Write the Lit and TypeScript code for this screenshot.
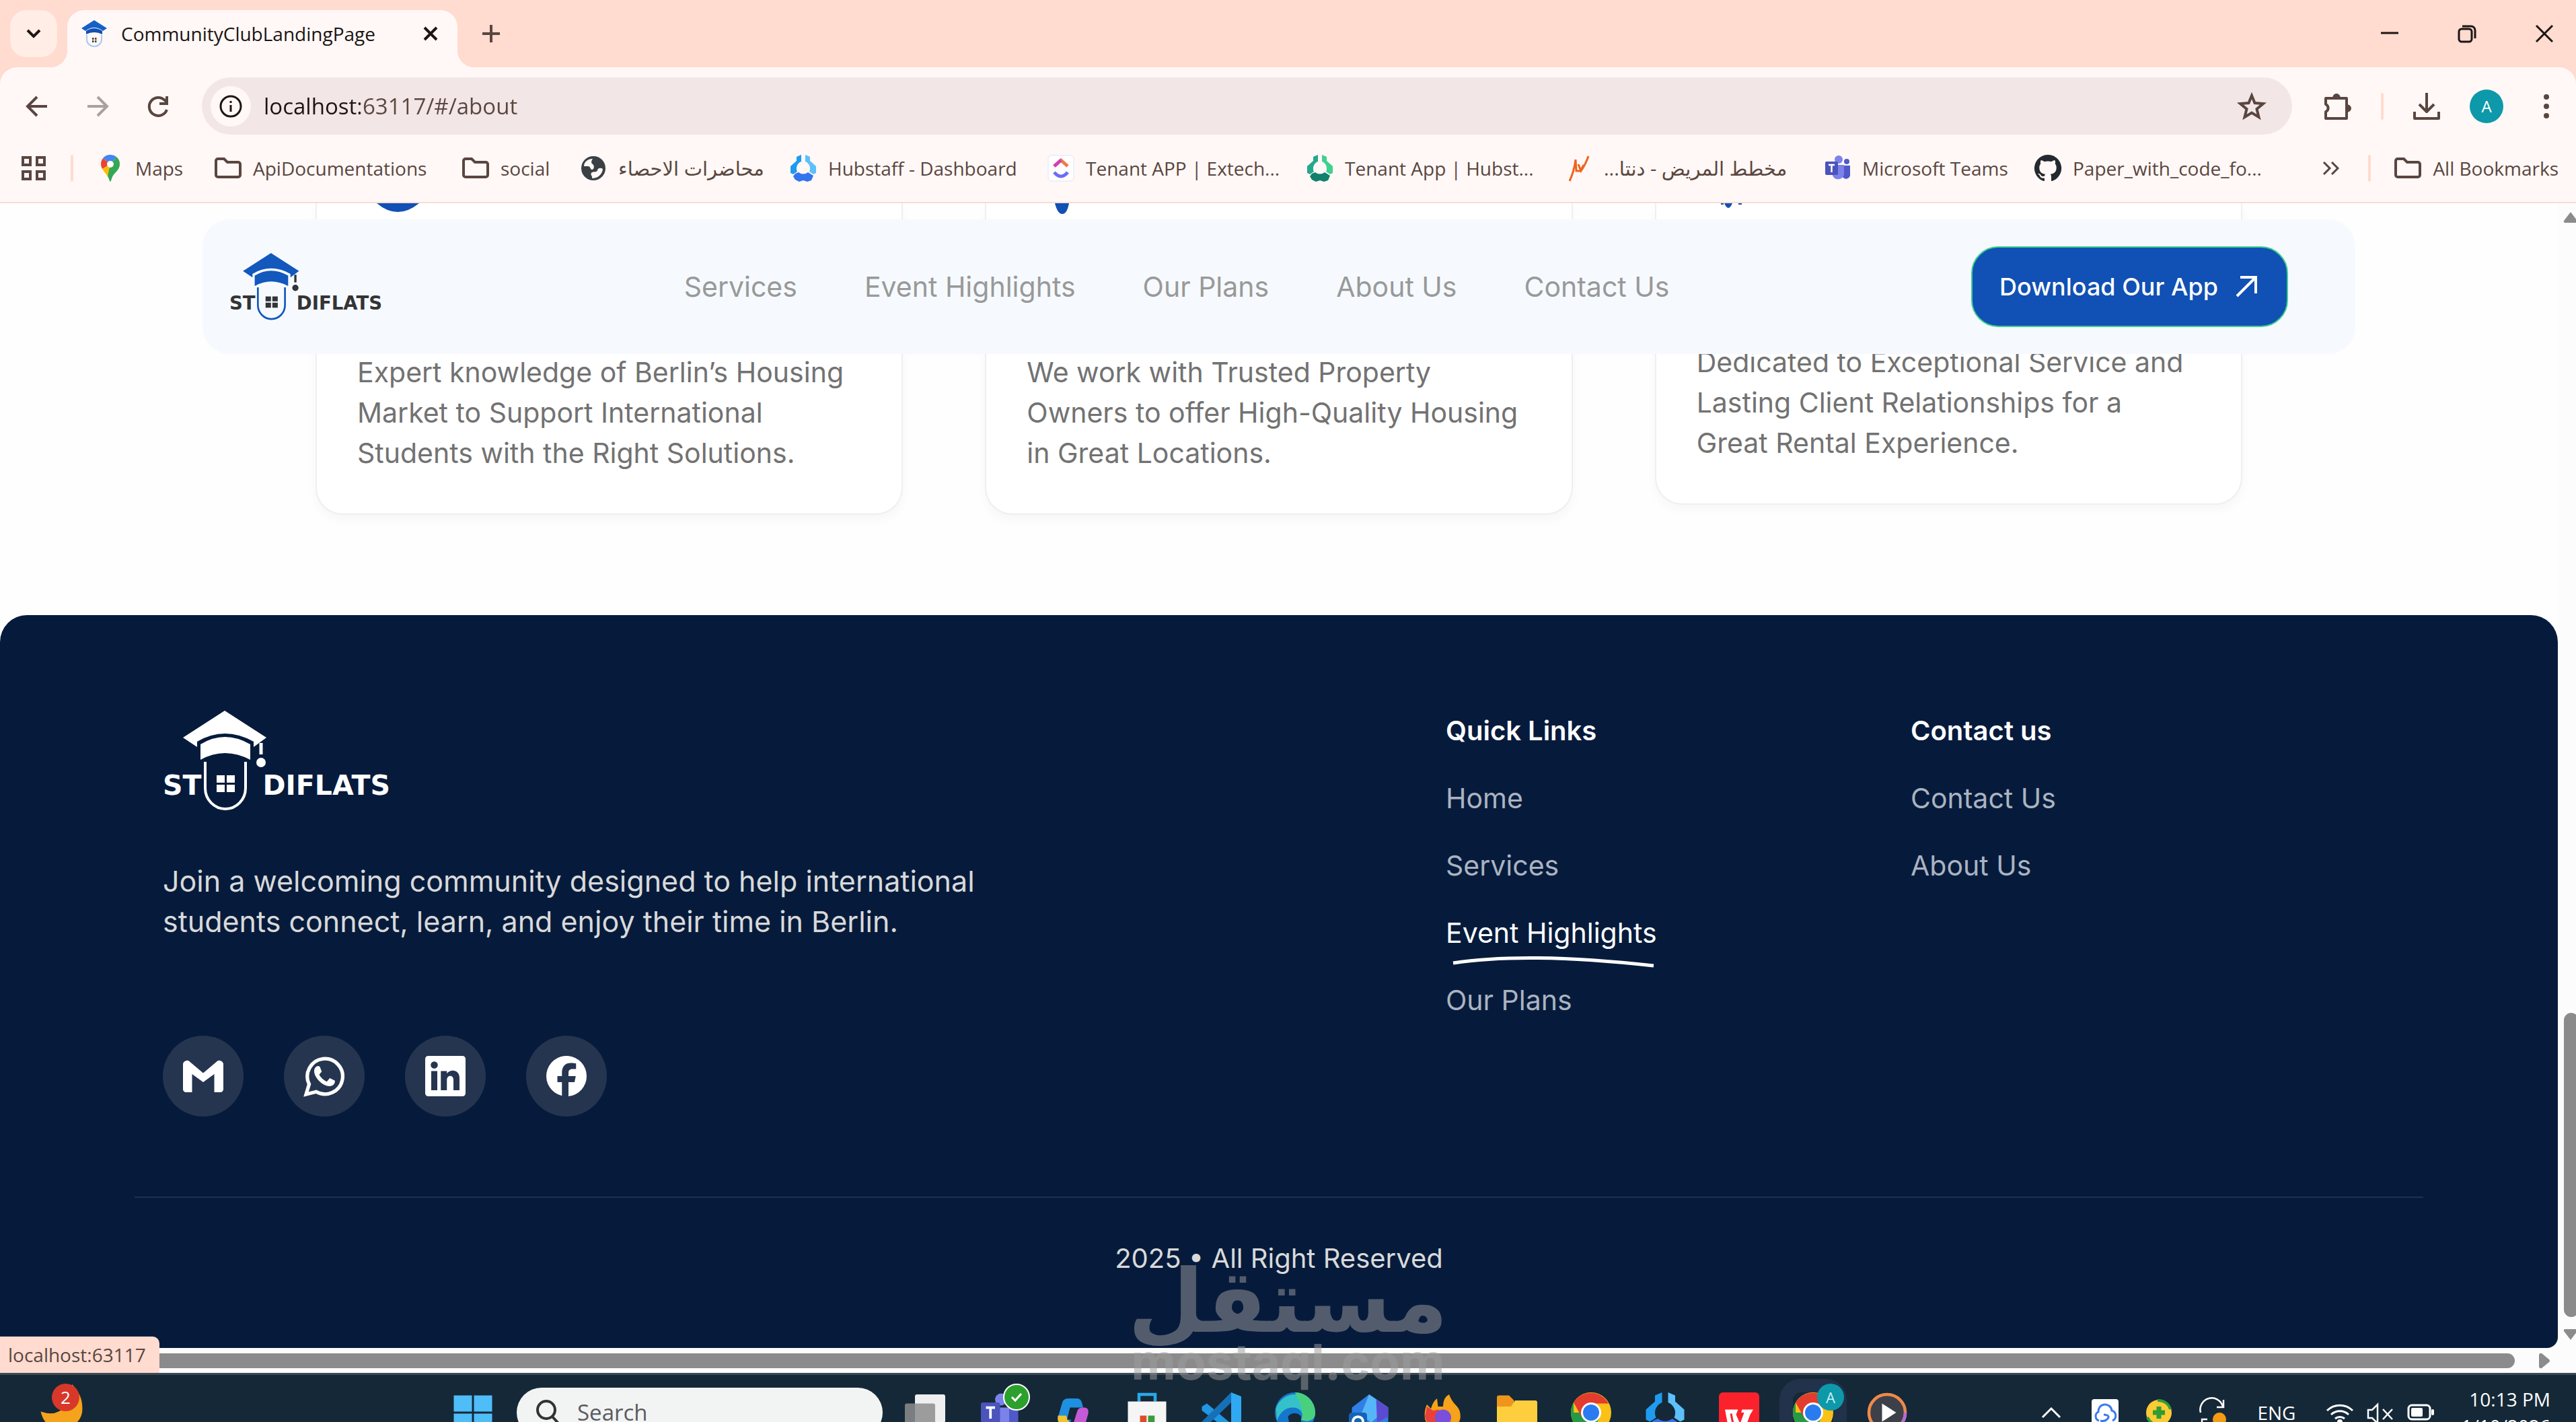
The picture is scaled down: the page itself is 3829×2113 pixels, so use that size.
import { LitElement, html, svg, css, nothing } from "lit";
import { customElement, property } from "lit/decorators.js";

const gearPath = (a: string, b: string, c: string) => svg`
  <path d="M17 0 10 3 10 9 1 17 1 27 5 29 11 25 A11 11 0 0 1 17 10Z" fill=${a} />
  <path d="M23 0 30 3 30 9 39 17 39 27 35 29 29 25 A11 11 0 0 0 23 10Z" fill=${b} />
  <path d="M8 28 13 26 A11 11 0 0 0 27 26 L35 31 32 38 26 40 20 38 14 40 8 37 5 32Z" fill=${c} />`;

const chromeArt = svg`
  <circle cx="20" cy="20" r="20" fill="#fbc116" />
  <path d="M20 20H2.7V10A20 20 0 0 0 20 40L28.600 25Z" fill="#249a45" />
  <path d="M2.700 10 11 25 20 11H37.300A20 20 0 0 0 2.700 10Z" fill="#e33b2e" />
  <circle cx="20" cy="20" r="10" fill="#fff" />
  <circle cx="20" cy="20" r="8" fill="#2a7bef" />`;

const teamsArt = svg`
  <circle cx="22" cy="7" r="6" fill="#7b83eb" />
  <circle cx="34" cy="10" r="4" fill="#5059c9" />
  <path d="M27 16H39V28A6 6 0 0 1 27 31Z" fill="#5059c9" />
  <path d="M13 15H30V29A9 9 0 0 1 13 31Z" fill="#7b83eb" />
  <rect x="2" y="10" width="19" height="20" rx="2" fill="#4b53bc" />
  <path d="M7 15H16M11.500 15V26" stroke="#fff" stroke-width="2.500" fill="none" />`;

const line = "#5a4640";

/* Every icon is drawn on a 40 by 40 grid. */
const icons: Record<string, unknown> = {
  chevronDown: svg`<path d="M11 15 20 24 29 15" fill="none" stroke="#1c1514" stroke-width="4" />`,
  tabClose: svg`<path d="M11 11 29 29M29 11 11 29" stroke="#1c1514" stroke-width="4" />`,
  plus: svg`<path d="M7 20H33M20 7V33" stroke=${line} stroke-width="4" />`,
  minimise: svg`<path d="M7 19H33" stroke="#1c1514" stroke-width="3" />`,
  restore: svg`<rect x="8" y="13" width="19" height="19" rx="4" fill="none" stroke="#1c1514" stroke-width="3" /><path d="M13 9H26A6 6 0 0 1 32 15V27" fill="none" stroke="#1c1514" stroke-width="3" />`,
  close: svg`<path d="M8 8 32 32M32 8 8 32" stroke="#1c1514" stroke-width="3" />`,
  back: svg`<path d="M35 20H7M20 6 6 20 20 34" fill="none" stroke=${line} stroke-width="4" />`,
  forward: svg`<path d="M5 20H33M20 6 34 20 20 34" fill="none" stroke="#aaa19f" stroke-width="4" />`,
  reload: svg`<path d="M33 25A13.500 13.500 0 1 1 30 11L33 14" fill="none" stroke=${line} stroke-width="4" /><path d="M35 5V18H22V14H31V5Z" fill=${line} />`,
  info: svg`<circle cx="20" cy="20" r="15" fill="none" stroke="#1c1514" stroke-width="3" /><path d="M20 18V28M20 12V15" stroke="#1c1514" stroke-width="3" />`,
  star: svg`<path d="M20 4 24.500 15 37 16 27.500 24 30.500 36 20 29.500 9.500 36 12.500 24 3 16 15.500 15Z" fill="none" stroke=${line} stroke-width="4" />`,
  puzzle: svg`<path d="M2 8H33V38H2V28A6 6 0 0 0 2 17Z" fill="none" stroke=${line} stroke-width="4" stroke-linejoin="round" /><path d="M12 8A6 7 0 0 1 24 8ZM33 17A7 6 0 0 1 33 29Z" fill=${line} />`,
  download: svg`<path d="M20 0V27M9 17 20 28 31 17M2 28V38H38V28" fill="none" stroke=${line} stroke-width="4" stroke-linejoin="round" />`,
  dots: svg`<g fill=${line}><circle cx="20" cy="6" r="4" /><circle cx="20" cy="20" r="4" /><circle cx="20" cy="34" r="4" /></g>`,
  apps: svg`<g fill="none" stroke=${line} stroke-width="4"><rect x="4" y="4" width="11" height="11" /><rect x="25" y="4" width="11" height="11" /><rect x="4" y="25" width="11" height="11" /><rect x="25" y="25" width="11" height="11" /></g>`,
  more: svg`<path d="M9 11 18 20 9 29M21 11 30 20 21 29" fill="none" stroke=${line} stroke-width="3" />`,
  folder: svg`<path d="M2 9A3 3 0 0 1 5 6H14L19 11H35A3 3 0 0 1 38 14V30A3 3 0 0 1 35 33H5A3 3 0 0 1 2 30Z" fill="none" stroke=${line} stroke-width="4" />`,
  maps: svg`<path d="M20 0A14 14 0 0 0 9 5L20 14 29 3A14 14 0 0 0 20 0Z" fill="#4285f4" /><path d="M9 5A14 14 0 0 0 8 21L20 14Z" fill="#ea4335" /><path d="M8 21C10 25 14 28 16 32L27 19 20 14Z" fill="#fbbc04" /><path d="M16 32C18 35 19 40 20 40S22 34 24 31C27 26 34 22 34 14A14 14 0 0 0 29 3L20 14Z" fill="#34a853" /><circle cx="20" cy="14" r="5" fill="#fff" />`,
  globe: svg`<circle cx="20" cy="20" r="18" fill="#3b4045" /><path d="M19 6C10 6 6 12 6 17H12C16 17 15 22 18 22S22 16 19 14 17 9 19 6ZM18 35C19 31 15 30 17 27S25 27 26 23 31 19 34 21C33 30 26 35 18 35Z" fill="#fff8f6" />`,
  hubstaff: gearPath("#1e9bf0", "#5bc0fb", "#3273f0"),
  hubstaffGreen: gearPath("#25a88c", "#3fd18f", "#12806d"),
  clickup: svg`<rect x="1" y="1" width="38" height="38" rx="5" fill="#fff" stroke="#dce7f5" /><path d="M10 17 20 8 30 17" fill="none" stroke="#f07a4a" stroke-width="5" /><path d="M10 17 20 8" fill="none" stroke="#d23fb8" stroke-width="5" /><path d="M10 26Q20 38 30 26" fill="none" stroke="#6d6df5" stroke-width="5" />`,
  trend: svg`<path d="M6 39Q13 24 15 7M15 7 16 24 22 24 27 15M19 14 23 24Q30 14 34 2" fill="none" stroke="#f0641e" stroke-width="3" />`,
  teams: teamsArt,
  github: svg`<path d="M20 0A20 20 0 0 0 13.700 39C14.700 39.200 15 38.600 15 38V34.500C9.500 35.700 8.300 32 8.300 32 7.400 29.700 6.100 29 6.100 29 4.300 27.800 6.200 27.800 6.200 27.800 8.200 28 9.300 29.900 9.300 29.900 11.100 32.900 14 32 15.100 31.500 15.300 30.200 15.800 29.300 16.400 28.800 12 28.300 7.300 26.600 7.300 18.900 7.300 16.700 8.100 15 9.300 13.600 9.100 13.100 8.400 11 9.500 8.200 9.500 8.200 11.200 7.700 15 10.300A19 19 0 0 1 25 10.300C28.800 7.700 30.500 8.200 30.500 8.200 31.600 11 30.900 13.100 30.700 13.600 32 15 32.700 16.700 32.700 18.900 32.700 26.600 28 28.300 23.600 28.800 24.300 29.400 25 30.600 25 32.500V38C25 38.600 25.300 39.200 26.400 39A20 20 0 0 0 20 0Z" fill="#24292f" />`,
  favicon: svg`<path d="M20 0 39 12 33 16Q20 6 7 16L1 12Z" fill="#1560c8" /><path d="M8 16Q20 8 32 16V21Q20 15 8 21Z" fill="#1150b4" /><path d="M9 22V29A11 10 0 0 0 31 29V22" fill="none" stroke="#a9c8f2" stroke-width="2" /><path d="M17 26H19.500V29H17ZM21 26H23.500V29H21ZM17 30H19.500V33H17ZM21 30H23.500V33H21Z" fill="#444" />`,
  arrowOut: svg`<path d="M6 34 34 6M11 6H34V30" fill="none" stroke="#fff" stroke-width="4" />`,
  gmail: svg`<path d="M0 9A4 4 0 0 1 7 6L20 17 33 6A4 4 0 0 1 40 9V33A3 3 0 0 1 37 36H31V18L20 26 9 18V36H3A3 3 0 0 1 0 33Z" fill="#fff" />`,
  whatsapp: svg`<path d="M2 38 5 28A17.500 17.500 0 1 1 12 35.500Z" fill="none" stroke="#fff" stroke-width="3.500" /><path d="M14 10C12 10 10 12 10 15 10 22 19 30 25 30 29 30 31 27 30.500 24.500L25.500 22 22.500 25.500C19 24 16.500 21.500 15 18.500L17.500 15.500 15.500 10.500Z" fill="#fff" />`,
  linkedin: svg`<path fill-rule="evenodd" d="M3 0H37A3 3 0 0 1 40 3V37A3 3 0 0 1 37 40H3A3 3 0 0 1 0 37V3A3 3 0 0 1 3 0ZM6 15V34H12V15ZM9 5.500A3.500 3.500 0 1 0 9 12.500 3.500 3.500 0 1 0 9 5.500ZM15.500 15V34H21.500V24C21.500 18.500 28 18.500 28 23.500V34H34V22C34 13 24.500 13 21.500 17.500V15Z" fill="#fff" />`,
  facebook: svg`<path d="M40 20A20 20 0 1 0 15.500 39.500V26H11V20H15.500V17C15.500 10 19 7 24.500 7 26.500 7 28 7.200 29.500 7.500V13H26C23 13 22 14.500 22 17V20H29.200L28 26H22V40A20 20 0 0 0 40 20Z" fill="#fff" />`,
  windows: svg`<path d="M1 3H19V19H1ZM21 3H39V19H21ZM1 21H19V37H1ZM21 21H39V37H21Z" fill="#4fbdf8" />`,
  search: svg`<circle cx="18" cy="16" r="13" fill="none" stroke="#333" stroke-width="4" /><path d="M27 26 37 37" stroke="#333" stroke-width="4" />`,
  taskView: svg`<rect x="10" y="2" width="30" height="28" rx="2" fill="#efefef" /><rect x="0" y="11" width="30" height="26" rx="2" fill="#8d8d8d" opacity=".85" />`,
  copilot: svg`<path d="M15 6H24Q28 6 29 11L30 15H24Q21 15 20 19L17 31H10Q4 31 5 25L9 11Q10 6 15 6Z" fill="#1f8fe0" /><path d="M29 15H31Q36 15 35 21L32 32Q31 36 26 36H15Q19 36 20 32L24 19Q25 15 29 15Z" fill="#c45ad8" /><path d="M5 23 13 23 17 31 15 36Q10 36 9 31Q4 31 5 23Z" fill="#f3c22f" /><path d="M17 15H23L19 27H14Z" fill="#152837" />`,
  store: svg`<path d="M12 9V2H28V9" fill="none" stroke="#28a8ea" stroke-width="3" /><path d="M1 9H39V35A4 4 0 0 1 35 39H5A4 4 0 0 1 1 35Z" fill="#f5f5f5" /><path d="M13 23H19.500V33H13Z" fill="#e04a2c" /><path d="M21 23H27.500V33H21Z" fill="#3c9a3c" /><path d="M13 34H19.500V38H13Z" fill="#1e9ae0" /><path d="M21 34H27.500V38H21Z" fill="#f3b41c" />`,
  vscode: svg`<path d="M30 10 12 23 26 34Z" fill="#152837" /><path d="M1 14 6 11 30 31V40L1 18Z" fill="#2196e3" /><path d="M1 29 30 0V10L6 33 1 31Z" fill="#1670b8" /><path d="M30 0 40 4V36L30 40Z" fill="#2fa9f2" />`,
  edge: svg`<circle cx="20" cy="20" r="20" fill="#1477cc" /><path d="M1 16A20 20 0 0 1 40 20C40 28 32 30 26 27 29 22 26 15 18 15 10 15 5 20 2 28Z" fill="#35c1c9" /><path d="M20 0A20 20 0 0 1 40 20C40 28 32 30 26 27 29 22 27 14 20 0Z" fill="#49d07f" /><path d="M13 24A8 8 0 0 1 26 24V40H16Z" fill="#152837" />`,
  outlook: svg`<path d="M20 2 39 15V36H3V15Z" fill="#2f7fe6" /><path d="M20 2 39 15 22 30 12 22Z" fill="#56b6fa" /><path d="M27 7 39 15V24L28 30Z" fill="#5a4bd0" /><rect x="0" y="20" width="18" height="20" rx="3" fill="#1463b8" /><circle cx="9" cy="29" r="5" fill="none" stroke="#fff" stroke-width="2.500" />`,
  firefox: svg`<path d="M4 12 8 16Q10 9 14 6L15 14H20Q20 5 26 2 28 8 33 13 38 18 37 26A18 17 0 0 1 2 26Q1 18 4 12Z" fill="#f7a21b" /><path d="M4 14 10 18 16 17 18 24 12 36A18 17 0 0 1 2 24Z" fill="#e8413c" /><circle cx="20" cy="25" r="8" fill="#7a4fdc" />`,
  explorer: svg`<path d="M0 5A2 2 0 0 1 2 3H12L17 8V14H0Z" fill="#f0951c" /><path d="M0 14H14L18 8H38A2 2 0 0 1 40 10V36H0Z" fill="#fdce3e" /><path d="M9 30H31V40H9Z" fill="#1c7fd4" />`,
  chrome: chromeArt,
  wps: svg`<rect width="40" height="44" rx="4" fill="#fb222b" /><path d="M6 17H19L17 22 21 31 25 20H22L23 17H34L31 22 25 38H21L17 29 14 38H10Z" fill="#fff" /><path d="M12 21 14 31" fill="none" stroke="#fb222b" stroke-width="2" />`,
  media: svg`<circle cx="20" cy="20" r="18" fill="#3d4048" stroke="#ef8a4a" stroke-width="3" /><path d="M20 38A18 18 0 0 0 38 20" fill="none" stroke="#b66ad6" stroke-width="3" /><path d="M15 11 29 20 15 29Z" fill="#fff" />`,
  chevronUp: svg`<path d="M7 27 20 14 33 27" fill="none" stroke="#fff" stroke-width="3" />`,
  cloud: svg`<rect width="40" height="44" rx="4" fill="#fff" /><path d="M11 32A7 7 0 0 1 10 19 10 10 0 0 1 30 17 8 8 0 0 1 31 32M13 32Q20 34 24 29T18 23" fill="none" stroke="#3a7bee" stroke-width="3" />`,
  shield: svg`<circle cx="20" cy="20" r="19" fill="#fccb35" /><path d="M18 2A18 18 0 0 1 37 15" fill="none" stroke="#2f9d33" stroke-width="4" /><path d="M3 27A18 18 0 0 0 13 37" fill="none" stroke="#2f9d33" stroke-width="4" /><path d="M20 11V29M11 20H29" stroke="#2f9d33" stroke-width="7" />`,
  sync: svg`<path d="M2 20A17 17 0 0 1 35 11M36 1V12H26M4 40V30H12" fill="none" stroke="#fff" stroke-width="2.500" /><circle cx="30" cy="30" r="10" fill="#f39a17" />`,
  wifi: svg`<g fill="none" stroke="#fff" stroke-width="3"><path d="M1 17A27 27 0 0 1 39 17M7 23A19 19 0 0 1 33 23M13 29A11 11 0 0 1 27 29" /></g><circle cx="20" cy="34" r="4" fill="#fff" />`,
  mute: svg`<path d="M2 16H8L16 8V36L8 28H2ZM24 15 38 30M38 15 24 30" fill="none" stroke="#fff" stroke-width="2.500" />`,
  battery: svg`<rect x="2" y="9" width="32" height="21" rx="5" fill="none" stroke="#fff" stroke-width="3" /><rect x="6" y="13" width="17" height="13" rx="2" fill="#fff" /><rect x="36" y="15" width="4" height="9" rx="2" fill="#fff" />`,
  weather: svg`<path d="M5 13Q32 22 36 -14 48 -2 46 14 44 24 34 28H14Q7 22 5 13Z" fill="#f5a31c" />`,
};

@customElement("ui-icon")
class UiIcon extends LitElement {
  @property() name = "";
  static styles = css`
    :host { display: block; flex: none; width: 40px; height: 40px; }
    .art { display: block; width: 100%; height: 100%; overflow: visible; }
  `;
  render() {
    return html`<svg class="art" viewBox="0 0 40 40" aria-hidden="true">${icons[this.name] ?? nothing}</svg>`;
  }
}

@customElement("brand-logo")
class BrandLogo extends LitElement {
  @property() tone = "light";
  static styles = css`
    :host { display: block; }
    .art { display: block; width: 100%; overflow: visible; }
    .word { font: 700 41px "DejaVu Sans", sans-serif; }
  `;
  render() {
    const light = this.tone === "light";
    const cap = light ? "#fff" : "#1258bd";
    const ink = light ? "#fff" : "#333436";
    return html`<svg class="art" viewBox="0 0 338 148" role="img" aria-label="Studiflats">
      <path d="M92 0 154 40 135 54V46Q92 22 51 46V54L30 40Z" fill=${cap} />
      <path d="M56 50Q92 28 130 50V73Q92 53 56 73Z" fill=${cap} />
      <path d="M63 76V115A30 31 0 0 0 123 115V76" fill="none" stroke=${cap} stroke-width="4" />
      <path d="M80 96H92V107H80ZM95 96H107V107H95ZM80 110H92V121H80ZM95 110H107V121H95Z" fill=${ink} />
      <path d="M146 48V65" stroke=${ink} stroke-width="5" />
      <circle cx="146" cy="77" r="7" fill=${ink} />
      <text class="word" x="0" y="125" fill=${ink}>ST</text>
      <text class="word" x="338" y="125" text-anchor="end" fill=${ink}>DIFLATS</text>
    </svg>`;
  }
}

const bookmarks = [
  ["maps", "Maps"],
  ["folder", "ApiDocumentations"],
  ["folder", "social"],
  ["globe", "محاضرات الاحصاء", "ar"],
  ["hubstaff", "Hubstaff - Dashboard"],
  ["clickup", "Tenant APP | Extech..."],
  ["hubstaffGreen", "Tenant App | Hubst..."],
  ["trend", "مخطط المريض - دنتا...", "ar"],
  ["teams", "Microsoft Teams"],
  ["github", "Paper_with_code_fo..."],
];

@customElement("browser-chrome")
class BrowserChrome extends LitElement {
  static styles = css`
    :host { display: block; font: 28px/40px "Open Sans", "DejaVu Sans", sans-serif; color: #5a4640; }
    button { border: 0; padding: 0; background: none; font: inherit; color: inherit; }
    .tabs { display: flex; align-items: flex-end; height: 100px; background: #ffdbd0; padding: 0 27px 0 15px; box-sizing: border-box; }
    .tab-search { display: grid; place-items: center; width: 70px; height: 70px; margin: 0 15px 15px 0; border-radius: 24px; background: #ffede6; }
    .tab { position: relative; display: flex; align-items: center; box-sizing: border-box; width: 580px; height: 85px; padding: 0 20px 15px; border-radius: 25px 25px 0 0; background: #fff8f6; color: #1c1514; }
    .tab::before, .tab::after { content: ""; position: absolute; bottom: 0; width: 25px; height: 25px; }
    .tab::before { right: 100%; background: radial-gradient(circle at 0 0, transparent 25px, #fff8f6 25px); }
    .tab::after { left: 100%; background: radial-gradient(circle at 100% 0, transparent 25px, #fff8f6 25px); }
    .tab-title { flex: 1; margin-left: 20px; white-space: nowrap; }
    .new-tab { margin: 0 auto 30px 30px; }
    .window { display: flex; gap: 75px; margin-bottom: 30px; }
    .bar { background: linear-gradient(#ffdbd0, #ffdbd0) top / 100% 25px no-repeat; }
    .bar-inner { background: #fff8f6; border-radius: 25px 25px 0 0; border-bottom: 2px solid #f6ddd5; }
    .row { display: flex; align-items: center; height: 115px; box-sizing: border-box; padding: 15px 24px 15px 35px; }
    .nav { display: flex; gap: 50px; margin-right: 45px; }
    .address { flex: 1; display: flex; align-items: center; height: 85px; margin-right: 48px; padding: 0 40px 0 13px; box-sizing: border-box; border-radius: 43px; background: #f2e6e6; }
    .site { display: grid; place-items: center; width: 60px; height: 60px; border-radius: 50%; background: #fff8f6; margin-right: 19px; }
    .url { flex: 1; border: 0; padding: 0; font: 33px/44px "Open Sans", sans-serif; color: transparent; background: linear-gradient(90deg, #1c1514 143px, #5a4640 143px); -webkit-background-clip: text; background-clip: text; outline: 0; }
    .rule { flex: none; width: 4px; height: 40px; border-radius: 2px; background: #ffdbd0; }
    .tools { display: flex; align-items: center; gap: 44px; }
    .avatar { width: 50px; height: 50px; border-radius: 50%; background: #0d99a9; color: #fff; font-size: 24px; line-height: 50px; text-align: center; }
    .bookmarks { display: flex; align-items: center; gap: 35px; height: 85px; padding: 0 26px 16px 30px; box-sizing: border-box; }
    .list { flex: 1; display: grid; grid-template-columns: 175px 368px 175px 312px 383px 385px 385px 384px 313px 1fr; }
    .mark { display: flex; align-items: center; gap: 17px; white-space: nowrap; color: inherit; text-decoration: none; }
    .ar { font-size: 29px; }
  `;
  render() {
    return html`
      <div class="tabs">
        <button class="tab-search" aria-label="Search tabs"><ui-icon name="chevronDown"></ui-icon></button>
        <div class="tab">
          <ui-icon name="favicon"></ui-icon>
          <span class="tab-title">CommunityClubLandingPage</span>
          <button aria-label="Close tab"><ui-icon name="tabClose"></ui-icon></button>
        </div>
        <button class="new-tab" aria-label="New tab"><ui-icon name="plus"></ui-icon></button>
        <div class="window">
          <button aria-label="Minimise"><ui-icon name="minimise"></ui-icon></button>
          <button aria-label="Restore"><ui-icon name="restore"></ui-icon></button>
          <button aria-label="Close"><ui-icon name="close"></ui-icon></button>
        </div>
      </div>
      <div class="bar"><div class="bar-inner">
        <div class="row">
          <div class="nav">
            <button aria-label="Back"><ui-icon name="back"></ui-icon></button>
            <button aria-label="Forward"><ui-icon name="forward"></ui-icon></button>
            <button aria-label="Reload"><ui-icon name="reload"></ui-icon></button>
          </div>
          <div class="address">
            <button class="site" aria-label="Site information"><ui-icon name="info"></ui-icon></button>
            <input class="url" aria-label="Address" value="localhost:63117/#/about" />
            <button aria-label="Bookmark this page"><ui-icon name="star"></ui-icon></button>
          </div>
          <div class="tools">
            <button aria-label="Extensions"><ui-icon name="puzzle"></ui-icon></button>
            <span class="rule"></span>
            <button aria-label="Downloads"><ui-icon name="download"></ui-icon></button>
            <button class="avatar" aria-label="Profile A">A</button>
            <button aria-label="Menu"><ui-icon name="dots"></ui-icon></button>
          </div>
        </div>
        <div class="bookmarks">
          <button aria-label="Apps"><ui-icon name="apps"></ui-icon></button>
          <span class="rule"></span>
          <nav class="list">
            ${bookmarks.map(([icon, label, lang]) => html`<a class="mark" href="#"><ui-icon name=${icon}></ui-icon><span class=${lang ?? "en"} dir="auto">${label}</span></a>`)}
          </nav>
          <button aria-label="More bookmarks"><ui-icon name="more"></ui-icon></button>
          <span class="rule"></span>
          <a class="mark" href="#"><ui-icon name="folder"></ui-icon>All Bookmarks</a>
        </div>
      </div></div>
    `;
  }
}

@customElement("landing-page")
class LandingPage extends LitElement {
  static styles = css`
    :host { display: flex; flex-direction: column; position: relative; overflow: hidden; background: #fefefe; font: 41px/60px Inter, sans-serif; color: #727272; }
    a { color: inherit; text-decoration: none; }
    .header { position: absolute; inset: 24px 301px auto; display: flex; align-items: center; justify-content: space-between; box-sizing: border-box; height: 200px; padding: 0 100px 0 40px; border-radius: 40px; background: #f6faff; }
    .header-logo { width: 227px; }
    .menu { display: flex; gap: 100px; color: #999; }
    .download { display: flex; align-items: center; gap: 22px; height: 120px; box-sizing: border-box; padding: 0 40px; border: 2px solid #3ccf8e; border-radius: 40px; background: #1150b4; color: #fff; font: 500 36px/50px Inter, sans-serif; }
    .cards { display: grid; grid-template-columns: repeat(3, 1fr); align-items: start; gap: 122px; padding: 0 469px; margin-bottom: 149px; }
    .card { box-sizing: border-box; padding: 0 60px 60px; border: 2px solid #efefef; border-top: 0; border-radius: 0 0 40px 40px; box-shadow: 0 8px 16px rgba(0, 0, 0, 0.03); background: #fff; }
    .peek { display: block; width: 120px; height: 18px; margin-bottom: 203px; }
    .card.short .peek { margin-bottom: 188px; }
    .card p { margin: 0; max-width: 744px; }
    .footer { flex: 1; display: flex; flex-direction: column; padding: 0 200px; border-radius: 40px 40px 16px 0; background: #061b3c; color: #d9d9d9; }
    .columns { display: grid; grid-template-columns: 1fr 691px 720px; padding: 142px 42px 119px; border-bottom: 2px solid #1f314e; }
    .footer-logo { width: 338px; margin-bottom: 75px; }
    .intro { margin: 0 0 140px; font-size: 43px; }
    .social { display: flex; gap: 60px; }
    .social a { display: grid; place-items: center; width: 120px; height: 120px; border-radius: 50%; background: #253550; }
    .social ui-icon { width: 60px; height: 60px; }
    .links { display: flex; flex-direction: column; align-items: flex-start; gap: 40px; color: #abb3c0; }
    .links h2 { margin: 0; font: 600 40px/60px Inter, sans-serif; color: #fff; }
    .current { position: relative; color: #fff; }
    .stroke { position: absolute; left: 10px; top: 66px; width: 300px; height: 16px; overflow: visible; }
    .copy { margin: 0; padding: 60px 0; font-size: 40px; text-align: center; }
  `;
  render() {
    return html`
      <main class="cards">
        <article class="card">
          <svg class="peek" viewBox="0 0 120 18" aria-hidden="true"><path d="M29 0Q60 26 92 0Z" fill="#1150b4" /></svg>
          <p>Expert knowledge of Berlin’s Housing Market to Support International Students with the Right Solutions.</p>
        </article>
        <article class="card">
          <svg class="peek" viewBox="0 0 120 18" aria-hidden="true"><path d="M42 0H63Q60 16 53 16T42 0Z" fill="#1150b4" /></svg>
          <p>We work with Trusted Property Owners to offer High-Quality Housing in Great Locations.</p>
        </article>
        <article class="card short">
          <svg class="peek" viewBox="0 0 120 18" aria-hidden="true"><path d="M41 0H53Q50 7 47 7T41 0ZM36 0H40V2H36ZM62 0H67V2H62Z" fill="#1150b4" /></svg>
          <p>Dedicated to Exceptional Service and Lasting Client Relationships for a<br />Great Rental Experience.</p>
        </article>
      </main>
      <header class="header">
        <brand-logo class="header-logo" tone="blue"></brand-logo>
        <nav class="menu">
          ${["Services", "Event Highlights", "Our Plans", "About Us", "Contact Us"].map((t) => html`<a href="#">${t}</a>`)}
        </nav>
        <button class="download">Download Our App<ui-icon name="arrowOut"></ui-icon></button>
      </header>
      <footer class="footer">
        <div class="columns">
          <div>
            <brand-logo class="footer-logo"></brand-logo>
            <p class="intro">Join a welcoming community designed to help international<br />students connect, learn, and enjoy their time in Berlin.</p>
            <div class="social">
              ${["gmail", "whatsapp", "linkedin", "facebook"].map((n) => html`<a href="#" aria-label=${n}><ui-icon name=${n}></ui-icon></a>`)}
            </div>
          </div>
          <nav class="links">
            <h2>Quick Links</h2>
            <a href="#">Home</a>
            <a href="#">Services</a>
            <a class="current" href="#">Event Highlights<svg class="stroke" viewBox="0 0 300 16" aria-hidden="true"><path d="M1 9Q110 -8 299 13" fill="none" stroke="#fff" stroke-width="5" /></svg></a>
            <a href="#">Our Plans</a>
          </nav>
          <nav class="links">
            <h2>Contact us</h2>
            <a href="#">Contact Us</a>
            <a href="#">About Us</a>
          </nav>
        </div>
        <p class="copy">2025 • All Right Reserved</p>
      </footer>
    `;
  }
}

@customElement("task-bar")
class TaskBar extends LitElement {
  static styles = css`
    :host { display: block; height: 70px; overflow: hidden; border-top: 3px solid #3c4a55; background: #152837; color: #fff; font: 28px/40px "Open Sans", sans-serif; }
    button { border: 0; padding: 0; background: none; font: inherit; color: inherit; }
    .inner { display: flex; align-items: center; height: 112px; padding: 0 38px 0 53px; }
    .weather { position: relative; flex: none; width: 620px; }
    .weather ui-icon { width: 60px; height: 60px; padding-top: 18px; }
    .count { position: absolute; left: 24px; top: -4px; width: 41px; height: 41px; border-radius: 50%; background: #d8382a; font-size: 26px; line-height: 41px; text-align: center; }
    .apps { display: flex; align-items: center; gap: 50px; }
    .apps ui-icon, .start ui-icon { width: 60px; height: 60px; }
    .find { display: flex; align-items: center; gap: 24px; box-sizing: border-box; width: 544px; height: 74px; margin: 0 33px 0 35px; padding: 0 26px; border-radius: 37px; background: #f2f4f4; }
    .find input { width: 100%; border: 0; padding: 0; background: none; outline: 0; font: 33px/44px "Open Sans", sans-serif; }
    .find input::placeholder { color: #5b5b5f; opacity: 1; }
    .app { position: relative; }
    .app.active { border-radius: 12px; box-shadow: 0 0 0 20px #21324a; }
    .badge { position: absolute; right: -16px; top: -13px; display: grid; place-items: center; width: 40px; height: 40px; border-radius: 50%; font-size: 22px; box-sizing: border-box; }
    .badge.ok { border: 2px solid #fff; background: #2ca02c; }
    .badge.user { background: #0d99a9; color: #c9f0f3; }
    .tray { display: flex; align-items: center; gap: 40px; margin-left: auto; }
    .lang { margin: 0 6px; }
    .status { display: flex; gap: 20px; }
    .clock { text-align: right; }
  `;
  render() {
    const apps = ["taskView", "teams", "copilot", "store", "vscode", "edge", "outlook", "firefox", "explorer", "chrome", "hubstaff", "wps", "chrome", "media"];
    return html`<div class="inner">
      <button class="weather" aria-label="Widgets"><ui-icon name="weather"></ui-icon><span class="count">2</span></button>
      <button class="start" aria-label="Start"><ui-icon name="windows"></ui-icon></button>
      <label class="find"><ui-icon name="search"></ui-icon><input type="search" placeholder="Search" aria-label="Search" /></label>
      <div class="apps">
        ${apps.map((name, i) => html`<button class="app ${i === 12 ? "active" : ""}" aria-label=${name}>
          <ui-icon name=${name}></ui-icon>
          ${i === 1 ? html`<span class="badge ok"><svg width="20" height="20" viewBox="0 0 20 20"><path d="M3 10 8 15 17 5" fill="none" stroke="#fff" stroke-width="3" /></svg></span>` : nothing}
          ${i === 12 ? html`<span class="badge user">A</span>` : nothing}
        </button>`)}
      </div>
      <div class="tray">
        <ui-icon name="chevronUp"></ui-icon>
        <ui-icon name="cloud"></ui-icon>
        <ui-icon name="shield"></ui-icon>
        <ui-icon name="sync"></ui-icon>
        <span class="lang">ENG</span>
        <div class="status"><ui-icon name="wifi"></ui-icon><ui-icon name="mute"></ui-icon><ui-icon name="battery"></ui-icon></div>
        <div class="clock">10:13 PM<br />1/10/2026</div>
      </div>
    </div>`;
  }
}

@customElement("app-root")
class AppRoot extends LitElement {
  static styles = css`
    :host { display: flex; flex-direction: column; position: relative; min-height: 100vh; overflow: hidden; background: #fcfcfc; }
    .view { flex: 1; display: flex; }
    landing-page { flex: 1; }
    .vscroll { display: flex; flex-direction: column; flex: none; width: 27px; box-sizing: border-box; padding: 12px 0 11px 7px; overflow: hidden; }
    .track { flex: 1; display: flex; flex-direction: column; justify-content: flex-end; }
    .vthumb { width: 22px; height: 452px; margin: 0 0 17px 2px; border-radius: 11px; background: #8b8b8b; }
    .arrow { display: block; width: 24px; height: 18px; }
    .hscroll { display: flex; align-items: center; gap: 36px; height: 37px; padding: 0 39px 0 20px; }
    .hthumb { flex: 1; height: 22px; border-radius: 11px; background: #8b8b8b; }
    .harrow { display: block; width: 16px; height: 24px; }
    .status { position: absolute; left: 0; bottom: 73px; box-sizing: border-box; height: 54px; padding: 0 20px 0 12px; border-radius: 0 10px 0 0; background: #ffdbd0; color: #5a4640; font: 28px/54px "Open Sans", sans-serif; }
    .mark { position: absolute; left: 50%; bottom: 54px; display: flex; flex-direction: column; align-items: center; transform: translateX(-50%); color: #a09d9e; opacity: 0.5; font: 700 73px/70px Inter, sans-serif; pointer-events: none; }
    .mark-ar { font: 700 130px/110px "DejaVu Sans", sans-serif; }
  `;
  render() {
    return html`
      <browser-chrome></browser-chrome>
      <div class="view">
        <landing-page></landing-page>
        <div class="vscroll" aria-hidden="true">
          <svg class="arrow" viewBox="0 0 24 18"><path d="M12 1 22 14Q23 17 20 17H4Q1 17 2 14Z" fill="#8b8b8b" /></svg>
          <div class="track"><div class="vthumb"></div></div>
          <svg class="arrow" viewBox="0 0 24 18"><path d="M12 17 22 4Q23 1 20 1H4Q1 1 2 4Z" fill="#8b8b8b" /></svg>
        </div>
      </div>
      <div class="hscroll" aria-hidden="true">
        <div class="hthumb"></div>
        <svg class="harrow" viewBox="0 0 16 24"><path d="M0 3Q1 0 4 1L15 10Q17 12 15 14L4 23Q1 24 0 21Z" fill="#8b8b8b" /></svg>
      </div>
      <task-bar></task-bar>
      <div class="status">localhost:63117</div>
      <div class="mark"><span class="mark-ar">مستقل</span><span>mostaql.com</span></div>
    `;
  }
}
